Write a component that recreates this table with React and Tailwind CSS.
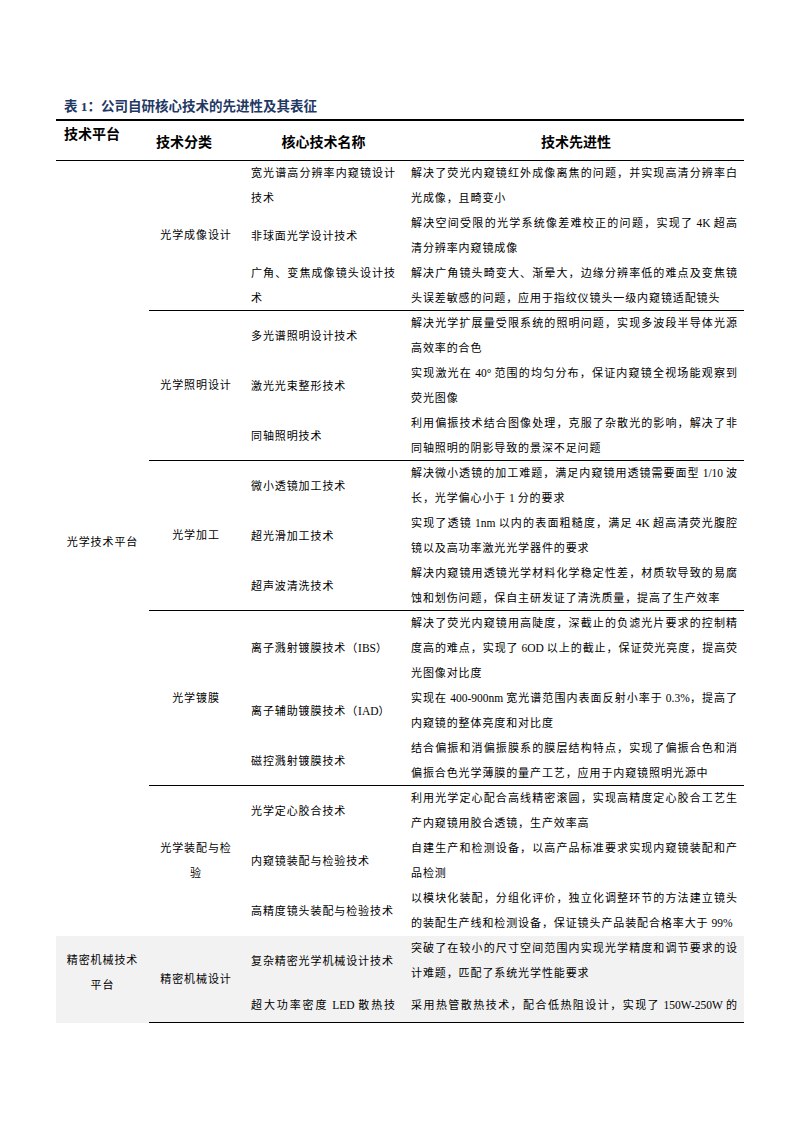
import React from "react";

const LAT = / ?[A-Za-z0-9°.%\/\-]+(?: [A-Za-z0-9°.%\/\-]+)* ?/g;

function Txt({ s }) {
  const parts = [];
  const re = new RegExp(LAT.source, "g");
  let last = 0;
  let m;
  let i = 0;
  while ((m = re.exec(s))) {
    if (m.index > last) parts.push(<span key={i++}>{s.slice(last, m.index)}</span>);
    parts.push(
      <span key={i++} className="tracking-normal text-[11.5px]">
        {m[0]}
      </span>
    );
    last = m.index + m[0].length;
  }
  if (last < s.length) parts.push(<span key={i++}>{s.slice(last)}</span>);
  return <>{parts}</>;
}

function Lines({ lines, all = false, center = false }) {
  return (
    <div className={center ? "text-center" : ""}>
      {lines.map((l, i) => (
        <div
          key={i}
          className={
            !center && (all || i < lines.length - 1)
              ? "whitespace-nowrap text-justify [text-align-last:justify]"
              : "whitespace-nowrap"
          }
        >
          <Txt s={l} />
        </div>
      ))}
    </div>
  );
}

const platforms = [
  {
    name: ["光学技术平台"],
    rowClass: "h-[775px]",
    groups: [
      {
        cat: ["光学成像设计"],
        h: "h-[150px] border-b border-black",
        items: [
          {
            h: "h-[50px]",
            name: ["宽光谱高分辨率内窥镜设计", "技术"],
            desc: ["解决了荧光内窥镜红外成像离焦的问题，并实现高清分辨率白", "光成像，且畸变小"],
          },
          {
            h: "h-[50px]",
            name: ["非球面光学设计技术"],
            desc: ["解决空间受限的光学系统像差难校正的问题，实现了 4K 超高", "清分辨率内窥镜成像"],
          },
          {
            h: "h-[50px]",
            name: ["广角、变焦成像镜头设计技", "术"],
            desc: ["解决广角镜头畸变大、渐晕大，边缘分辨率低的难点及变焦镜", "头误差敏感的问题，应用于指纹仪镜头一级内窥镜适配镜头"],
          },
        ],
      },
      {
        cat: ["光学照明设计"],
        h: "h-[150px] border-b border-black",
        items: [
          {
            h: "h-[50px]",
            name: ["多光谱照明设计技术"],
            desc: ["解决光学扩展量受限系统的照明问题，实现多波段半导体光源", "高效率的合色"],
          },
          {
            h: "h-[50px]",
            name: ["激光光束整形技术"],
            desc: ["实现激光在 40° 范围的均匀分布，保证内窥镜全视场能观察到", "荧光图像"],
          },
          {
            h: "h-[50px]",
            name: ["同轴照明技术"],
            desc: ["利用偏振技术结合图像处理，克服了杂散光的影响，解决了非", "同轴照明的阴影导致的景深不足问题"],
          },
        ],
      },
      {
        cat: ["光学加工"],
        h: "h-[150px] border-b border-black",
        items: [
          {
            h: "h-[50px]",
            name: ["微小透镜加工技术"],
            desc: ["解决微小透镜的加工难题，满足内窥镜用透镜需要面型 1/10 波", "长，光学偏心小于 1 分的要求"],
          },
          {
            h: "h-[50px]",
            name: ["超光滑加工技术"],
            desc: ["实现了透镜 1nm 以内的表面粗糙度，满足 4K 超高清荧光腹腔", "镜以及高功率激光光学器件的要求"],
          },
          {
            h: "h-[50px]",
            name: ["超声波清洗技术"],
            desc: ["解决内窥镜用透镜光学材料化学稳定性差，材质软导致的易腐", "蚀和划伤问题，保自主研发证了清洗质量，提高了生产效率"],
          },
        ],
      },
      {
        cat: ["光学镀膜"],
        h: "h-[175px] border-b border-black",
        items: [
          {
            h: "h-[75px]",
            name: ["离子溅射镀膜技术（IBS）"],
            desc: [
              "解决了荧光内窥镜用高陡度，深截止的负滤光片要求的控制精",
              "度高的难点，实现了 6OD 以上的截止，保证荧光亮度，提高荧",
              "光图像对比度",
            ],
          },
          {
            h: "h-[50px]",
            name: ["离子辅助镀膜技术（IAD）"],
            desc: ["实现在 400-900nm 宽光谱范围内表面反射小率于 0.3%，提高了", "内窥镜的整体亮度和对比度"],
          },
          {
            h: "h-[50px]",
            name: ["磁控溅射镀膜技术"],
            desc: ["结合偏振和消偏振膜系的膜层结构特点，实现了偏振合色和消", "偏振合色光学薄膜的量产工艺，应用于内窥镜照明光源中"],
          },
        ],
      },
      {
        cat: ["光学装配与检", "验"],
        h: "h-[150px]",
        items: [
          {
            h: "h-[50px]",
            name: ["光学定心胶合技术"],
            desc: ["利用光学定心配合高线精密滚圆，实现高精度定心胶合工艺生", "产内窥镜用胶合透镜，生产效率高"],
          },
          {
            h: "h-[50px]",
            name: ["内窥镜装配与检验技术"],
            desc: ["自建生产和检测设备，以高产品标准要求实现内窥镜装配和产", "品检测"],
          },
          {
            h: "h-[50px]",
            name: ["高精度镜头装配与检验技术"],
            desc: ["以模块化装配，分组化评价，独立化调整环节的方法建立镜头", "的装配生产线和检测设备，保证镜头产品装配合格率大于 99%"],
          },
        ],
      },
    ],
  },
  {
    name: ["精密机械技术", "平台"],
    rowClass: "h-[87px] bg-[#f2f2f2]",
    groups: [
      {
        cat: ["精密机械设计"],
        h: "h-[87px] border-b border-black",
        items: [
          {
            h: "h-[50px]",
            name: ["复杂精密光学机械设计技术"],
            desc: ["突破了在较小的尺寸空间范围内实现光学精度和调节要求的设", "计难题，匹配了系统光学性能要求"],
          },
          {
            h: "h-[36px] pt-[7px]",
            top: true,
            all: true,
            name: ["超大功率密度 LED 散热技"],
            desc: ["采用热管散热技术，配合低热阻设计，实现了 150W-250W 的"],
          },
        ],
      },
    ],
  },
];

export default function App() {
  return (
    <div className="w-[793px] min-h-[1122px] bg-white pt-[99px] font-['Liberation_Serif','Noto_Sans_CJK_SC',serif] text-black">
      <div className="ml-[56px] w-[688px]">
        <div className="pl-[8px] text-[13.5px] leading-[16px] font-bold text-[#1f3864]">
          表 1：公司自研核心技术的先进性及其表征
        </div>
        <div className="mt-[4px] h-[2px] bg-black" />
        <div className="flex h-[40px] border-b border-black text-[14px] leading-[16px] font-bold font-['Noto_Sans_CJK_SC',sans-serif]">
          <div className="w-[93px] pl-[8px] pt-[4px]">技术平台</div>
          <div className="w-[94px] pl-[7px] flex items-center">技术分类</div>
          <div className="w-[161px] flex items-center justify-center">核心技术名称</div>
          <div className="w-[340px] flex items-center justify-center pl-[4px]">技术先进性</div>
        </div>
        <div className="text-[11px] leading-[25px] tracking-[0.9px]">
          {platforms.map((p, pi) => (
            <div key={pi} className={"flex " + p.rowClass}>
              <div className="w-[93px] flex items-center justify-center pb-[13px]">
                <Lines lines={p.name} center />
              </div>
              <div className="w-[595px] flex flex-col">
                {p.groups.map((g, gi) => (
                  <div key={gi} className={"flex " + g.h}>
                    <div className="w-[94px] flex items-center justify-center">
                      <Lines lines={g.cat} center />
                    </div>
                    <div className="w-[501px] flex flex-col">
                      {g.items.map((it, ii) => (
                        <div key={ii} className={"flex " + it.h}>
                          <div
                            className={
                              "w-[161px] pl-[8px] pr-[8px] flex " +
                              (it.top ? "items-start" : "items-center")
                            }
                          >
                            <div className="w-full">
                              <Lines lines={it.name} all={it.all} />
                            </div>
                          </div>
                          <div className="w-[340px] pl-[7px] pr-[6px]">
                            <Lines lines={it.desc} all={it.all} />
                          </div>
                        </div>
                      ))}
                    </div>
                  </div>
                ))}
              </div>
            </div>
          ))}
        </div>
      </div>
    </div>
  );
}
